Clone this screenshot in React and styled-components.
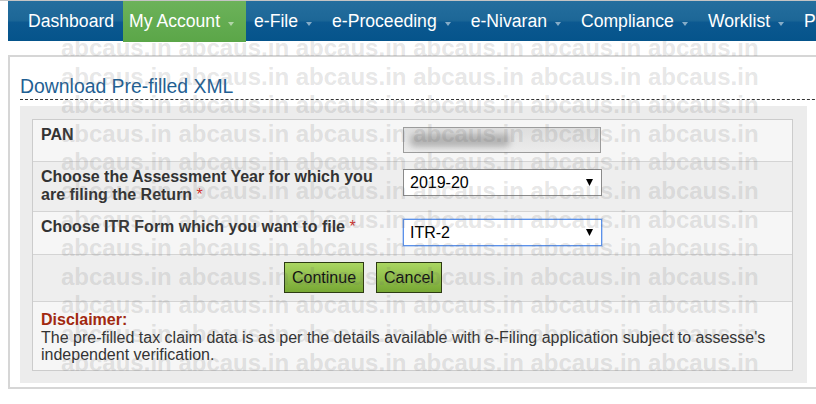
import React from "react";
import styled, { createGlobalStyle } from "styled-components";

const GlobalStyle = createGlobalStyle`
  html, body {
    margin: 0;
    padding: 0;
    background: #fff;
  }
  body {
    font-family: "Liberation Sans", Arial, sans-serif;
    color: #333;
  }
`;

const Page = styled.div`
  position: relative;
  height: 403px;
  padding-left: 8px;
  border-top: 1px solid #c4c4c4;
  overflow: hidden;
`;

const TopNav = styled.ul`
  position: relative;
  z-index: 10;
  display: flex;
  width: 900px;
  height: 40px;
  margin: 0;
  padding: 0 0 0 14px;
  list-style: none;
  white-space: nowrap;
  background: linear-gradient(#246e9e 0%, #1d6797 48%, #0b5890 54%, #05548b 100%);
`;

const NavItem = styled.li`
  height: ${(p) => (p.$active ? "41px" : "40px")};
  padding: 0 ${(p) => (p.$caret ? "12px" : "9px")} 0
    ${(p) => (p.$active || !p.$caret ? "6px" : "8px")};
  font-size: 17.6px;
  line-height: 40px;
  color: #fff;
  background: ${(p) => (p.$active ? "linear-gradient(#6cb25a, #5ba648)" : "transparent")};
`;

const Caret = styled.span`
  display: inline-block;
  width: 0;
  height: 0;
  margin-left: 8px;
  vertical-align: 1px;
  border-left: 3.5px solid transparent;
  border-right: 3.5px solid transparent;
  border-top: 4px solid rgba(255, 255, 255, 0.5);
`;

const Panel = styled.div`
  width: 830px;
  margin-top: 14px;
  padding: 0 10px 4px;
  border: 2px solid #d6d6d6;
  background: #fff;
`;

const PanelTitle = styled.h2`
  margin: 18px 0 0;
  padding-bottom: 2px;
  font-size: 19.4px;
  font-weight: normal;
  line-height: 22px;
  color: #1f5f93;
  border-bottom: 1px dashed #333;
`;

const FormWell = styled.div`
  width: 761px;
  margin-top: 6px;
  padding: 13px 14px 12px 12px;
  background: #ececec;
`;

const FormTable = styled.div`
  border: 1px solid #cccccc;
`;

const Row = styled.div`
  display: grid;
  grid-template-columns: 360px 1fr;
  background: ${(p) => (p.$shade ? "#eeeeee" : "#f6f6f6")};
  border-bottom: 1px solid #d4d4d4;
  &:last-child {
    border-bottom: none;
  }
`;

const Label = styled.div`
  padding: 6px 8px 7px;
  font-size: 16px;
  font-weight: bold;
  line-height: 18px;
  color: #333;
`;

const Required = styled.span`
  color: #d0312d;
  font-weight: normal;
`;

const Field = styled.div`
  padding: 7px 10px 8px;
`;

const MaskedInput = styled.div`
  display: flex;
  align-items: center;
  box-sizing: border-box;
  width: 198px;
  height: 26px;
  padding-left: 6px;
  border: 1px solid #9c9c9c;
  background: linear-gradient(#dedede, #ececec);
`;

const Smudge = styled.div`
  width: 100px;
  height: 13px;
  border-radius: 5px;
  background: #8a8a8a;
  opacity: 0.55;
  filter: blur(3px);
`;

const SelectBox = styled.div`
  display: flex;
  align-items: center;
  justify-content: space-between;
  box-sizing: border-box;
  width: 199px;
  height: 27px;
  padding: 0 8px 0 6px;
  font-size: 16px;
  color: #000;
  background: #fff;
  border: 1px solid ${(p) => (p.$focused ? "#5b91ea" : "#8a8a8a")};
  box-shadow: ${(p) => (p.$focused ? "0 0 0 1px rgba(91, 145, 234, 0.35)" : "none")};
`;

const ButtonRow = styled.div`
  display: flex;
  gap: 12px;
  padding: 7px 0 8px 251px;
  background: #eeeeee;
  border-bottom: 1px solid #d4d4d4;
`;

const GreenButton = styled.button`
  height: 31px;
  padding: 0 7px;
  font-family: "Liberation Sans", Arial, sans-serif;
  font-size: 16px;
  color: #111;
  border: 1px solid #2c3a12;
  border-radius: 0;
  background: linear-gradient(#aad662, #77a834);
  cursor: pointer;
`;

const Disclaimer = styled.div`
  padding: 9px 8px 6px;
  font-size: 16px;
  line-height: 17.5px;
  color: #333;
  background: #f6f6f6;
`;

const DisclaimerTitle = styled.div`
  font-weight: bold;
  color: #a1290f;
`;

const Watermark = styled.div`
  position: absolute;
  top: 33px;
  left: 61px;
  z-index: 5;
  font-size: 24px;
  font-weight: bold;
  line-height: 28.6px;
  color: rgba(110, 110, 110, 0.18);
  white-space: pre;
  pointer-events: none;
`;

const Arrow = () => (
  <svg width="7" height="7" viewBox="0 0 7 7">
    <polygon points="0,0 7,0 3.5,7" fill="#000" />
  </svg>
);

const navItems = [
  { label: "Dashboard" },
  { label: "My Account", caret: true, active: true },
  { label: "e-File", caret: true },
  { label: "e-Proceeding", caret: true },
  { label: "e-Nivaran", caret: true },
  { label: "Compliance", caret: true },
  { label: "Worklist", caret: true },
  { label: "Profile Settings", caret: true },
];

const watermarkText = Array.from({ length: 12 })
  .map(() => Array.from({ length: 6 }).fill("abcaus.in").join(" "))
  .join("\n");

const App = () => {
  return (
    <Page>
      <GlobalStyle />
      <TopNav>
        {navItems.map((item) => (
          <NavItem key={item.label} $active={item.active} $caret={item.caret}>
            {item.label}
            {item.caret && <Caret />}
          </NavItem>
        ))}
      </TopNav>

      <Panel>
        <PanelTitle>Download Pre-filled XML</PanelTitle>
        <FormWell>
          <FormTable>
            <Row>
              <Label>PAN</Label>
              <Field>
                <MaskedInput>
                  <Smudge />
                </MaskedInput>
              </Field>
            </Row>
            <Row $shade>
              <Label>
                Choose the Assessment Year for which you are filing the Return{" "}
                <Required>*</Required>
              </Label>
              <Field>
                <SelectBox>
                  <span>2019-20</span>
                  <Arrow />
                </SelectBox>
              </Field>
            </Row>
            <Row>
              <Label>
                Choose ITR Form which you want to file <Required>*</Required>
              </Label>
              <Field>
                <SelectBox $focused>
                  <span>ITR-2</span>
                  <Arrow />
                </SelectBox>
              </Field>
            </Row>
            <ButtonRow>
              <GreenButton>Continue</GreenButton>
              <GreenButton>Cancel</GreenButton>
            </ButtonRow>
            <Disclaimer>
              <DisclaimerTitle>Disclaimer:</DisclaimerTitle>
              The pre-filled tax claim data is as per the details available with e-Filing
              application subject to assesse's independent verification.
            </Disclaimer>
          </FormTable>
        </FormWell>
      </Panel>

      <Watermark>{watermarkText}</Watermark>
    </Page>
  );
};

export default App;
